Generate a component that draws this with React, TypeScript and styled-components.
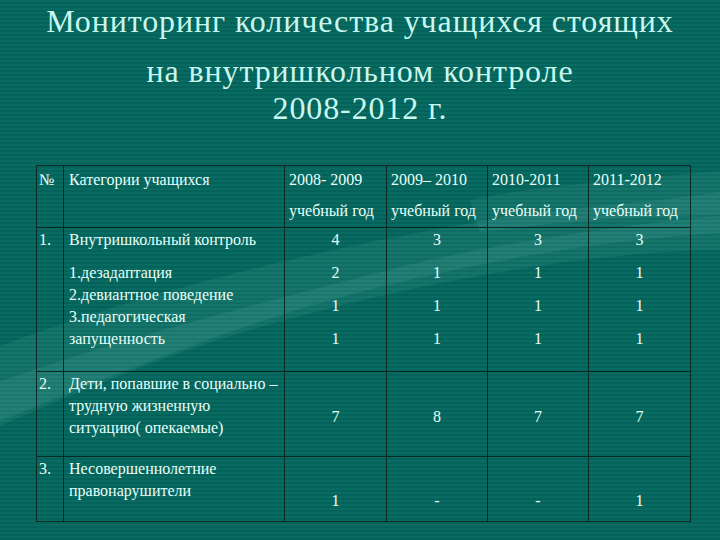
import React from 'react'
import styled, { createGlobalStyle } from 'styled-components'

const GlobalStyle = createGlobalStyle`
  html, body {
    margin: 0;
    padding: 0;
  }
  body {
    font-family: 'Liberation Serif', serif;
  }
`

type Align = 'top' | 'middle' | 'bottom'

type Row = {
  num: string
  title: string[]
  items?: string[]
  values: string[][]
  align: Align
}

const years = ['2008- 2009', '2009– 2010', '2010-2011', '2011-2012']

const rows: Row[] = [
  {
    num: '1.',
    title: ['Внутришкольный  контроль'],
    items: ['1.дезадаптация', '2.девиантное поведение', '3.педагогическая', 'запущенность'],
    values: [
      ['4', '2', '1', '1'],
      ['3', '1', '1', '1'],
      ['3', '1', '1', '1'],
      ['3', '1', '1', '1'],
    ],
    align: 'top',
  },
  {
    num: '2.',
    title: ['Дети, попавшие в социально –', 'трудную жизненную', 'ситуацию( опекаемые)'],
    values: [['7'], ['8'], ['7'], ['7']],
    align: 'middle',
  },
  {
    num: '3.',
    title: ['Несовершеннолетние', 'правонарушители'],
    values: [['1'], ['-'], ['-'], ['1']],
    align: 'bottom',
  },
]

const rowHeights = { top: 144, middle: 85, bottom: 65 }
const colWidths = [27, 221, 102, 101, 101, 102]

const App = () => {
  return (
    <Slide>
      <GlobalStyle />
      {/* faint background swoosh of the slide template */}
      <Swoosh viewBox="0 0 720 540" preserveAspectRatio="none">
        <path d="M-10 350 C 120 300, 300 250, 520 215 C 600 205, 680 200, 730 190 L 730 250 C 600 250, 420 280, 250 330 C 150 360, 60 400, -10 430 Z" />
        <path d="M-10 385 C 100 345, 250 305, 420 262 C 520 240, 620 225, 730 215 L 730 232 C 600 240, 470 262, 330 300 C 200 338, 90 385, -10 425 Z" />
        <path d="M470 200 C 540 185, 640 178, 730 170 L 730 215 C 640 215, 560 222, 480 232 Z" />
      </Swoosh>
      <Content>
        <Title>
          <TitleLead>Мониторинг количества учащихся стоящих</TitleLead>
          <TitleRest>
            на внутришкольном контроле
            <br />
            2008-2012 г.
          </TitleRest>
        </Title>
        <Table>
          <colgroup>
            {colWidths.map((w, i) => (
              <col key={i} style={{ width: w }} />
            ))}
          </colgroup>
          <thead>
            <tr>
              <HeadCell $pad={2}>
                <HeadLine>№</HeadLine>
              </HeadCell>
              <HeadCell $pad={5}>
                <HeadLine>Категории учащихся</HeadLine>
              </HeadCell>
              {years.map(y => (
                <HeadCell key={y} $pad={4}>
                  <HeadLine>{y}</HeadLine>
                  <SubLine>учебный год</SubLine>
                </HeadCell>
              ))}
            </tr>
          </thead>
          <tbody>
            {rows.map(r => (
              <BodyRow key={r.num} $height={rowHeights[r.align]}>
                <NumCell>
                  <Line>{r.num}</Line>
                </NumCell>
                <TextCell>
                  {r.title.map(t => (
                    <Line key={t}>{t}</Line>
                  ))}
                  {r.items && (
                    <Items>
                      {r.items.map(t => (
                        <Line key={t}>{t}</Line>
                      ))}
                    </Items>
                  )}
                </TextCell>
                {r.values.map((v, i) => (
                  <ValueCell key={i} $align={r.align}>
                    <Values>
                      {v.map((n, j) => (
                        <Line key={j}>{n}</Line>
                      ))}
                    </Values>
                  </ValueCell>
                ))}
              </BodyRow>
            ))}
          </tbody>
        </Table>
      </Content>
    </Slide>
  )
}

export default App

const Slide = styled.div`
  position: relative;
  width: 720px;
  height: 540px;
  overflow: hidden;
  font-family: 'Liberation Serif', serif;
  background-color: #03675e;
  background-image: repeating-linear-gradient(
    to bottom,
    rgba(255, 255, 255, 0.025) 0px,
    rgba(255, 255, 255, 0.025) 2px,
    rgba(0, 0, 0, 0.05) 2px,
    rgba(0, 0, 0, 0.05) 4px
  );
`

const Swoosh = styled.svg`
  position: absolute;
  inset: 0;
  width: 720px;
  height: 540px;
  fill: rgba(190, 255, 240, 0.075);
  pointer-events: none;
`

const Content = styled.div`
  position: relative;
  display: flex;
  flex-direction: column;
  align-items: flex-start;
`

const Title = styled.div`
  width: 720px;
  padding-top: 1px;
  text-align: center;
  color: #c9f7ef;
  font-family: 'Liberation Serif', serif;
  font-size: 32px;
  letter-spacing: 0.9px;
  line-height: 41px;
`

const TitleLead = styled.div`
  margin-bottom: 11px;
`

const TitleRest = styled.div`
  line-height: 37px;
`

const Table = styled.table`
  margin: 38px 0 0 36px;
  width: 654px;
  border-collapse: collapse;
  table-layout: fixed;
  color: #e9fff9;
  font-family: 'Liberation Serif', serif;
  font-size: 16px;
`

const HeadCell = styled.th<{ $pad: number }>`
  border: 1px solid #0a2824;
  vertical-align: top;
  height: 61px;
  padding: 0 0 0 ${p => p.$pad}px;
  font-weight: normal;
  text-align: left;
  white-space: nowrap;
`

const HeadLine = styled.div`
  line-height: 28px;
`

const SubLine = styled.div`
  line-height: 33px;
`

const BodyRow = styled.tr<{ $height: number }>`
  height: ${p => p.$height}px;
`

const NumCell = styled.td`
  border: 1px solid #0a2824;
  vertical-align: top;
  padding: 1px 0 0 2px;
`

const TextCell = styled.td`
  border: 1px solid #0a2824;
  vertical-align: top;
  padding: 1px 0 0 5px;
`

const Items = styled.div`
  margin-top: 11px;
`

const cellPadding = { top: '1px 0 0 0', middle: '5px 0 0 0', bottom: '0 0 9px 0' }

const ValueCell = styled.td<{ $align: Align }>`
  border: 1px solid #0a2824;
  vertical-align: ${p => p.$align};
  text-align: center;
  padding: ${p => cellPadding[p.$align]};
`

const Values = styled.div`
  display: flex;
  flex-direction: column;
  gap: 11px;
`

const Line = styled.div`
  line-height: 22px;
`
